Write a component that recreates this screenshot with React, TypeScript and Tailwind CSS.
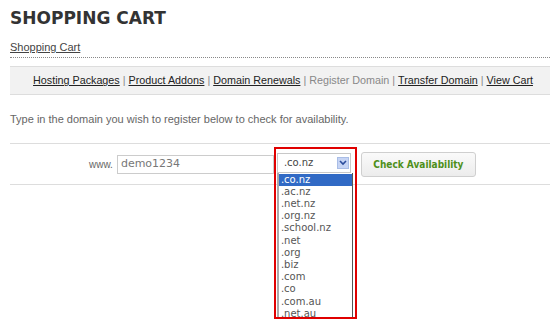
import React from 'react';

const tlds = ['.co.nz', '.ac.nz', '.net.nz', '.org.nz', '.school.nz', '.net', '.org', '.biz', '.com', '.co', '.com.au', '.net.au', '.org.au', '.asn.au'];

function NavLink({ children }: { children: React.ReactNode }) {
    return <a className="underline text-[#222] cursor-pointer">{children}</a>;
}

export default function App() {
    return (
        <div className="relative w-[550px] h-[319px] overflow-hidden bg-white font-['Liberation_Sans',Arial,sans-serif] text-[#333]">
            <div className="pl-[10px]">
                {/* Title */}
                <h1 className="pt-[8px] text-[17px] leading-[20px] font-bold text-[#333] font-['DejaVu_Sans',Verdana,sans-serif]">
                    SHOPPING CART
                </h1>

                {/* Breadcrumb */}
                <div className="mt-[13px] text-[11px] leading-[13px]">
                    <a className="underline text-[#444]">Shopping Cart</a>
                </div>
                <div className="mt-[3px] border-b border-dotted border-[#888]" />

                {/* Sub nav */}
                <div className="mt-[8px] h-[29px] flex items-center justify-center whitespace-nowrap border-y border-[#ddd] bg-[#f2f2f2] text-[10.75px] text-[#888] pl-[6px]">
                    <NavLink>Hosting Packages</NavLink>
                    <span className="mx-[3px]">|</span>
                    <NavLink>Product Addons</NavLink>
                    <span className="mx-[3px]">|</span>
                    <NavLink>Domain Renewals</NavLink>
                    <span className="mx-[3px]">|</span>
                    <span>Register Domain</span>
                    <span className="mx-[3px]">|</span>
                    <NavLink>Transfer Domain</NavLink>
                    <span className="mx-[3px]">|</span>
                    <NavLink>View Cart</NavLink>
                </div>

                {/* Intro */}
                <p className="mt-[18px] text-[11px] leading-[13px] text-[#666]">
                    Type in the domain you wish to register below to check for availability.
                </p>

                {/* Domain form */}
                <div className="mt-[17px] h-[42px] flex items-center border-y border-[#ddd] pl-[79px]">
                    <span className="text-[10px] text-[#666]">www.</span>
                    <div className="ml-[4px] w-[157px] h-[19px] border border-[#ccc] flex items-center pl-[3px] text-[11px] text-[#777] font-['DejaVu_Sans',Verdana,sans-serif]">
                        demo1234
                    </div>

                    <div className="relative ml-[3px] w-[74px] h-[20px] -mt-[3px]">
                        <div className="w-full h-full border border-[#c8c8c8] bg-white flex items-center pl-[6px] text-[10px] text-[#444] font-['DejaVu_Sans',Verdana,sans-serif]">
                            .co.nz
                        </div>
                        <div className="absolute right-[2px] top-[4px] w-[12px] h-[12px] bg-[#c6d4f4] border border-[#a9bde6] flex items-center justify-center">
                            <svg width="8" height="6" viewBox="0 0 8 6">
                                <path d="M1 1 L4 4 L7 1" fill="none" stroke="#2b4c9c" strokeWidth="1.6" />
                            </svg>
                        </div>

                        {/* Open list */}
                        <div className="absolute left-0 top-[20px] w-[76px] bg-white border-l-2 border-[#aaa] border-r border-r-[#555] pt-[1px] text-[10px] leading-[12.2px] text-[#555] font-['DejaVu_Sans',Verdana,sans-serif] z-10">
                            {tlds.map((t, i) => (
                                <div key={t} className={i === 0 ? 'bg-[#316ac5] text-white pl-[2px]' : 'pl-[2px]'}>
                                    {t}
                                </div>
                            ))}
                        </div>

                        {/* Highlight frame */}
                        <div className="absolute -left-[3px] -top-[6px] w-[83px] h-[172px] border-2 border-[#e00000] z-20 pointer-events-none" />
                    </div>

                    <button className="ml-[10px] w-[115px] h-[25px] rounded-[3px] border border-[#cfcfcf] bg-gradient-to-b from-[#fafafa] to-[#ececec] text-[10px] font-bold text-[#4e8f1a] font-['DejaVu_Sans_Condensed','DejaVu_Sans',sans-serif]">
                        Check Availability
                    </button>
                </div>
            </div>
        </div>
    );
}
